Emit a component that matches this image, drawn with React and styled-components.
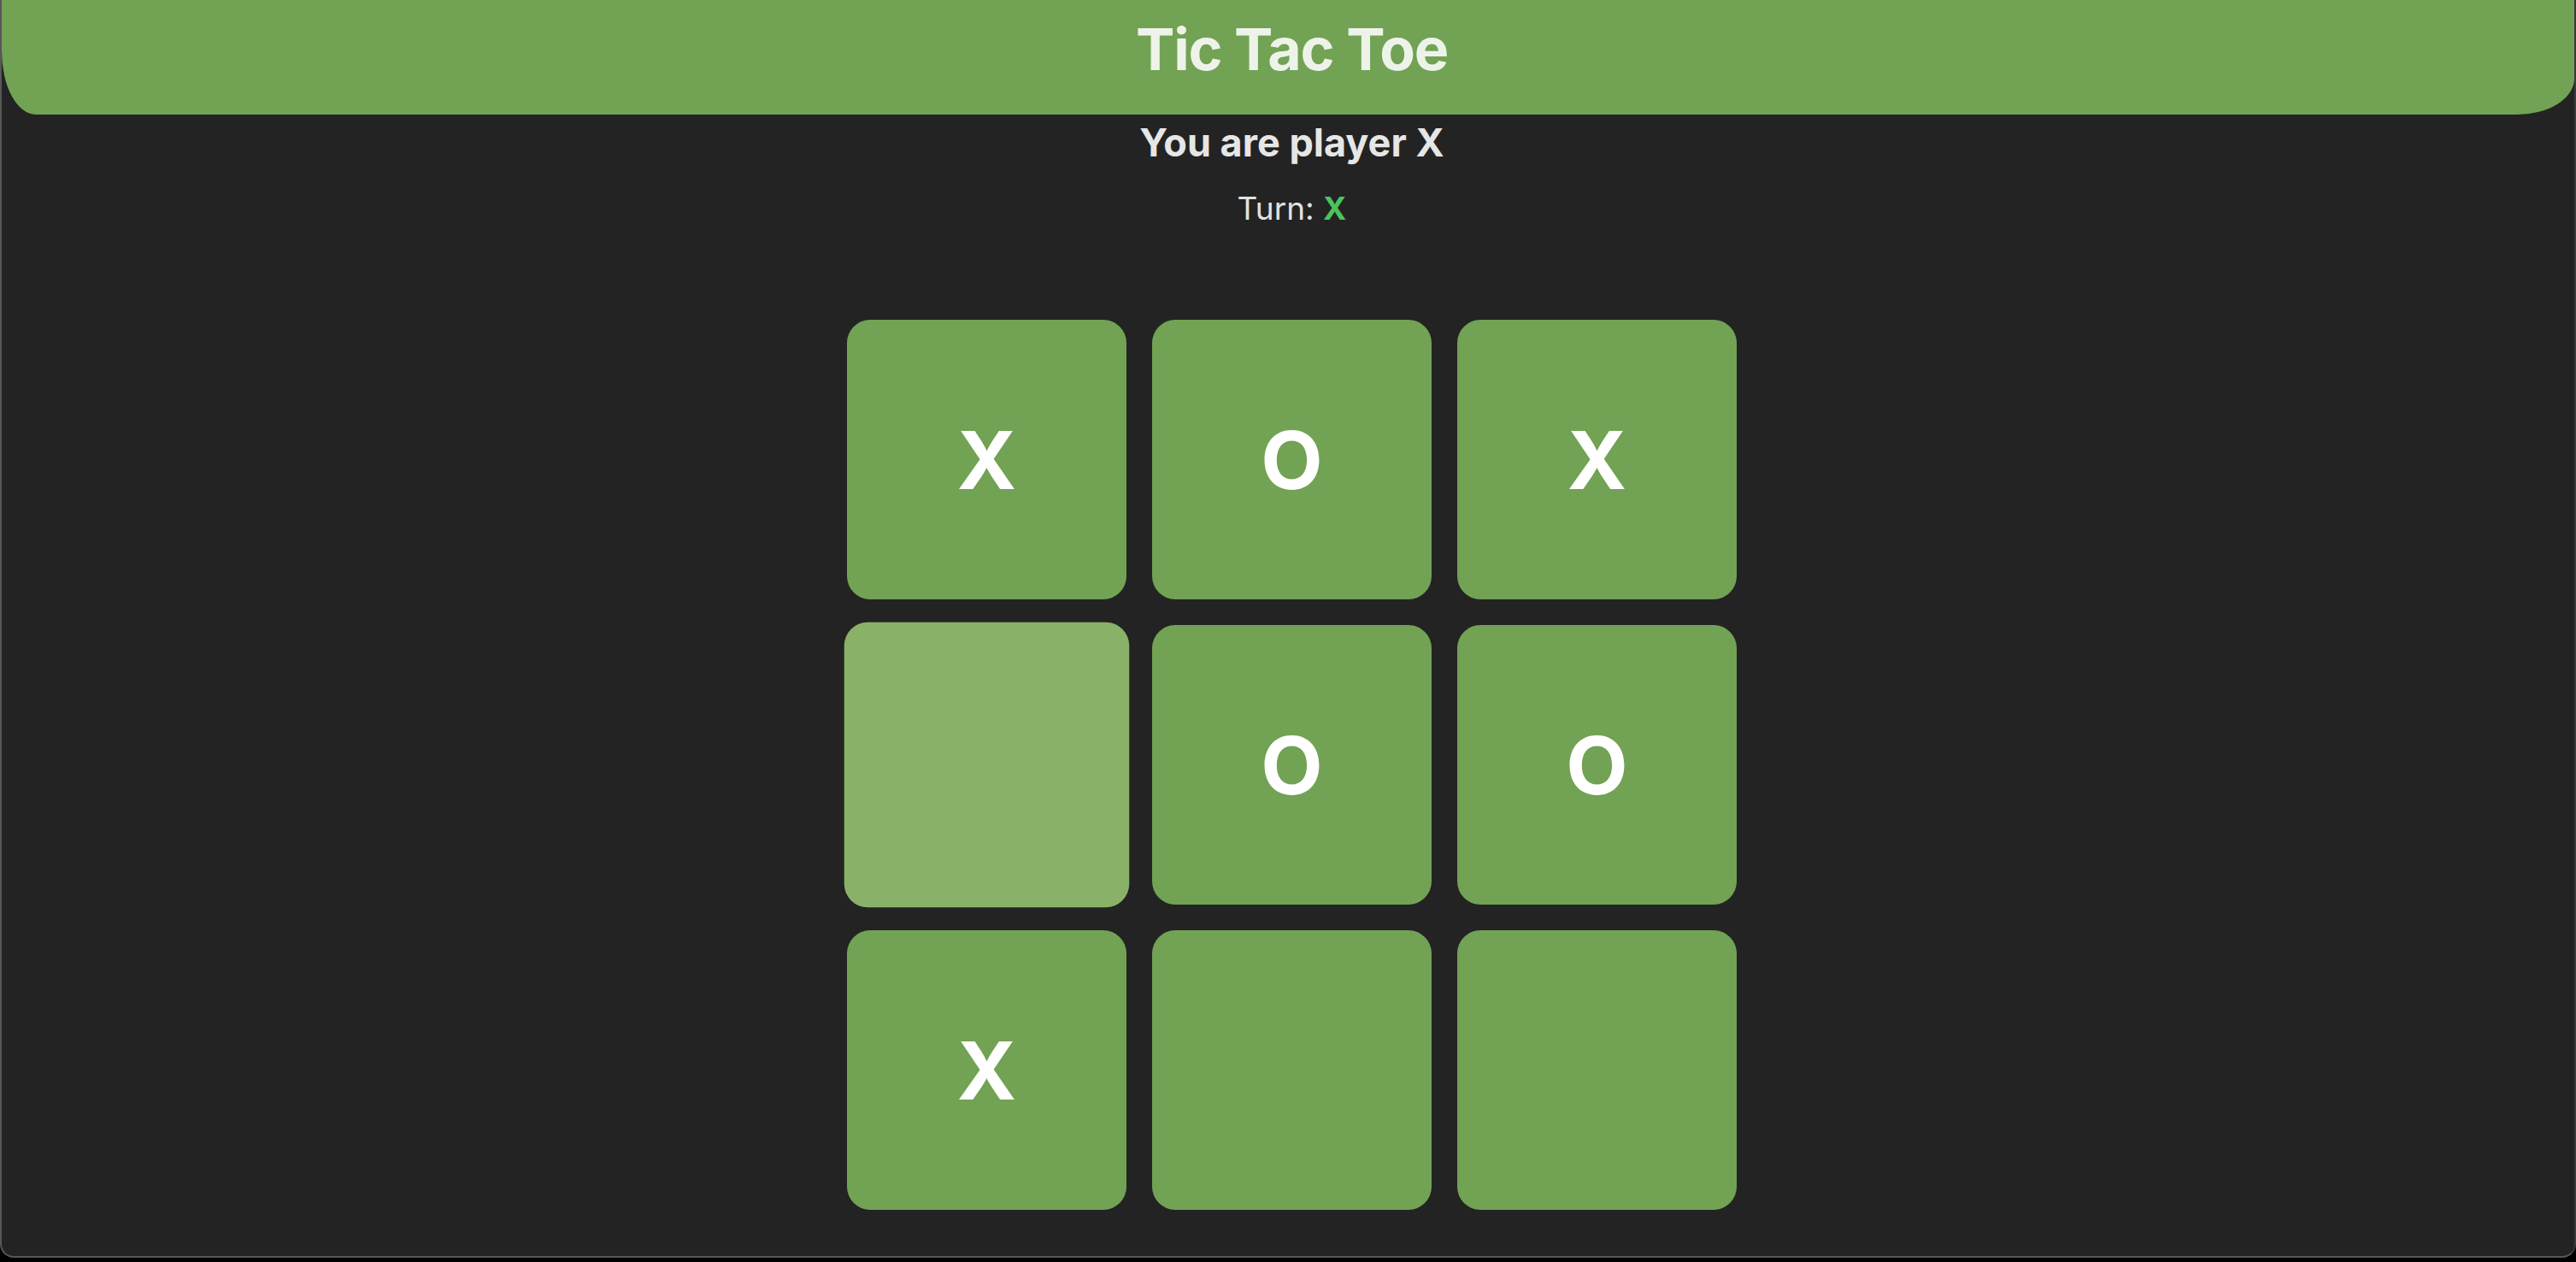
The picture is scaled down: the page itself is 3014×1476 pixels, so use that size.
import React from 'react';
import styled, { createGlobalStyle } from 'styled-components';

const GlobalStyle = createGlobalStyle`
  html, body {
    margin: 0;
    padding: 0;
    background: #000000;
    font-family: Inter, "Noto Sans", sans-serif;
  }
`;

const Window = styled.div`
  box-sizing: border-box;
  width: 3014px;
  height: 1471px;
  background-color: #232323;
  border-left: 2px solid #575757;
  border-right: 2px solid #3a3a3a;
  border-bottom: 2px solid #575757;
  border-radius: 0 0 16px 16px;
  overflow: hidden;
  display: flex;
  flex-direction: column;
`;

const Header = styled.header`
  height: 134px;
  flex-shrink: 0;
  display: flex;
  justify-content: center;
  align-items: flex-start;
  padding-left: 9px;
  padding-top: 17px;
  box-sizing: border-box;
  background-color: #72a254;
  border-bottom-left-radius: 40px 74px;
  border-bottom-right-radius: 67px 42px;
`;

const Title = styled.h1`
  margin: 0;
  font-size: 68px;
  line-height: 80px;
  font-weight: 700;
  letter-spacing: -1.2px;
  color: #eef3ea;
`;

const Main = styled.main`
  display: flex;
  flex-direction: column;
  align-items: center;
  padding-left: 9px;
`;

const PlayerLine = styled.h2`
  margin: 6px 0 0;
  font-size: 45px;
  line-height: 54px;
  font-weight: 700;
  color: #e6e6e6;
`;

const TurnLine = styled.p`
  margin: 26px 0 0;
  font-size: 37px;
  line-height: 48px;
  font-weight: 400;
  color: #e2e2e2;
`;

const TurnMark = styled.span`
  color: #4cc35a;
  font-weight: 700;
`;

const Board = styled.div`
  margin-top: 106px;
  display: grid;
  grid-template-columns: repeat(3, 327px);
  grid-auto-rows: 327px;
  gap: 30px;
`;

const Cell = styled.button`
  border: none;
  padding: 0;
  border-radius: 27px;
  background-color: ${(p) => (p.$hover ? '#89b268' : '#72a254')};
  transform: ${(p) => (p.$hover ? 'scale(1.02)' : 'none')};
  color: #ffffff;
  font-family: Inter, "Noto Sans", sans-serif;
  font-size: 94px;
  font-weight: 700;
  display: flex;
  align-items: center;
  justify-content: center;
  cursor: pointer;
`;

const cells = ['X', 'O', 'X', '', 'O', 'O', 'X', '', ''];

export default function App() {
  return (
    <>
      <GlobalStyle />
      <Window>
        <Header>
          <Title>Tic Tac Toe</Title>
        </Header>
        <Main>
          <PlayerLine>You are player X</PlayerLine>
          <TurnLine>
            Turn: <TurnMark>X</TurnMark>
          </TurnLine>
          <Board>
            {cells.map((c, i) => (
              <Cell key={i} $hover={i === 3}>
                {c}
              </Cell>
            ))}
          </Board>
        </Main>
      </Window>
    </>
  );
}
